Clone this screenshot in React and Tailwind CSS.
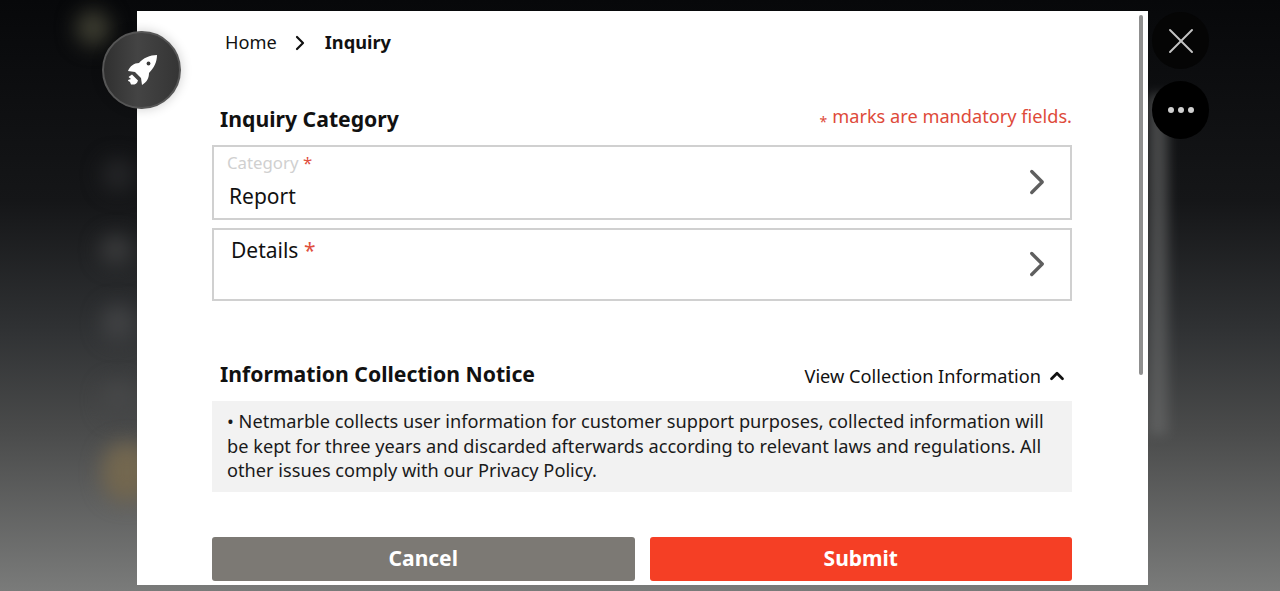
import { ChevronRight, ChevronUp, X } from 'lucide-react';

const glows = [
  'left-[76px] top-[10px] w-[34px] h-[36px] bg-[#3d3d31]',
  'left-[102px] top-[158px] w-[32px] h-[34px] bg-[#242527]',
  'left-[100px] top-[235px] w-[32px] h-[30px] bg-[#3a3b3c]',
  'left-[102px] top-[305px] w-[32px] h-[36px] bg-[#414244]',
  'left-[102px] top-[382px] w-[32px] h-[36px] bg-[#464748]',
  'left-[102px] top-[442px] w-[50px] h-[60px] bg-[#73674f]',
];

const Star = () => <span className="text-[#e0503f]">*</span>;

const SelectRow = ({ className, children }) => (
  <div className={`flex items-center justify-between border-2 border-[#d0d0d0] pr-[12px] ${className}`}>
    <div className="flex-1">{children}</div>
    <ChevronRight size={42} strokeWidth={1.9} className="mb-[2px] text-[#5f5f5f]" />
  </div>
);

const RocketIcon = () => (
  <svg width="34" height="34" viewBox="0 0 34 34" fill="white">
    <path d="M32 2C25 2 18 5 14 10C9 10 5 13 3 18L10 19L16 25L17 32C22 29 24 25 24 20C29 15 32 9 32 2Z" />
    <circle cx="23.500" cy="10.500" r="1.900" fill="#3a3a3a" />
    <path d="M7 21.500L13 27.500C12 31 9.500 32 6 31.500L5 29C4 28.500 3 28 3 27L6 26L3.500 24Z" />
  </svg>
);

export default function App() {
  return (
    <div className="relative w-[1280px] h-[591px] overflow-hidden bg-[linear-gradient(to_bottom,#07080a_0%,#151618_34%,#303234_56%,#4a4b4b_73%,#7a7b7a_100%)] font-['Noto_Sans',sans-serif]">
      {/* Blurred game behind the dialog */}
      {glows.map((glow) => (
        <div key={glow} className={`absolute rounded-full blur-[10px] ${glow}`} />
      ))}
      <div className="absolute left-[1148px] top-[95px] w-[20px] h-[340px] bg-[#6a6b6b] opacity-60 blur-[6px]" />

      <div className="pt-[11px] pl-[137px]">
        <div className="relative w-[1011px] h-[574px] bg-white pl-[75px] overflow-hidden">
          {/* Breadcrumb */}
          <div className="flex items-center h-[62px] pt-[1px] pl-[13px] text-[18.2px] text-[#111]">
            <span>Home</span>
            <ChevronRight size={24} strokeWidth={2.2} className="ml-[11px] mr-[13px]" />
            <span className="font-bold">Inquiry</span>
          </div>

          <div className="w-[860px]">
            <div className="flex items-center justify-between h-[32px] mt-[30px] pl-[8px]">
              <h2 className="text-[21.200px] font-bold text-[#111]">Inquiry Category</h2>
              <p className="pb-[4px] text-[18.200px] text-[#de4a3a]">
                <span className="inline-block translate-y-[4px] mr-[5px] text-[14px]">*</span>marks are mandatory fields.
              </p>
            </div>

            <SelectRow className="h-[75px] mt-[10px]">
              <div className="pl-[13px] text-[16.800px] leading-[20px] text-[#d0d0d0]">Category <Star /></div>
              <div className="pl-[15px] mt-[9px] pb-[2px] text-[21px] leading-[28px] text-[#111]">Report</div>
            </SelectRow>
            <SelectRow className="h-[73px] mt-[8px]">
              <div className="pl-[17px] pb-[29px] text-[21px] leading-[28px] text-[#111]">Details <Star /></div>
            </SelectRow>

            <div className="flex items-center justify-between h-[32px] mt-[59px] pl-[8px]">
              <h2 className="pb-[4px] text-[21.200px] font-bold text-[#111]">Information Collection Notice</h2>
              <div className="flex items-center pt-[1px] pr-[4px] text-[18.200px] text-[#111]">
                View Collection Information
                <ChevronUp size={22} strokeWidth={3} className="ml-[5px]" />
              </div>
            </div>

            <div className="mt-[9px] h-[91px] bg-[#f2f2f2] pl-[15px] pr-[20px] pt-[8px] text-[18.200px] leading-[24.500px] text-[#1a1a1a]">
              • Netmarble collects user information for customer support purposes, collected information will be kept for three years and discarded afterwards according to relevant laws and regulations. All other issues comply with our Privacy Policy.
            </div>

            <div className="flex gap-[15px] mt-[45px]">
              <button className="flex-1 h-[44px] rounded-[3px] bg-[#7c7974] text-[21px] font-bold text-white">Cancel</button>
              <button className="flex-1 h-[44px] rounded-[3px] bg-[#f53f25] text-[21px] font-bold text-white">Submit</button>
            </div>
          </div>

          {/* Scrollbar */}
          <div className="absolute right-[5px] top-[4px] w-[4px] h-[360px] rounded-full bg-[#8f8f8f]" />
        </div>
      </div>

      {/* Floating buttons */}
      <div className="absolute left-[102px] top-[31px] flex items-center justify-center w-[79px] h-[78px] rounded-full bg-gradient-to-r from-[#303030] via-[#444444] via-45% to-[#353535] border-2 border-[#565656] shadow-[0_0_12px_rgba(0,0,0,0.2)]">
        <RocketIcon />
      </div>
      <div className="absolute left-[1152px] top-[12px] flex items-center justify-center w-[57px] h-[57px] rounded-full bg-[#050505]">
        <X size={44} strokeWidth={1.05} className="text-[#c4c4c4]" />
      </div>
      <div className="absolute left-[1152px] top-[81px] flex items-center justify-center gap-[4px] w-[57px] h-[58px] rounded-full bg-black">
        <span className="w-[6px] h-[6px] rounded-full bg-[#cfcfcf]" />
        <span className="w-[6px] h-[6px] rounded-full bg-[#cfcfcf]" />
        <span className="w-[6px] h-[6px] rounded-full bg-[#cfcfcf]" />
      </div>
    </div>
  );
}
